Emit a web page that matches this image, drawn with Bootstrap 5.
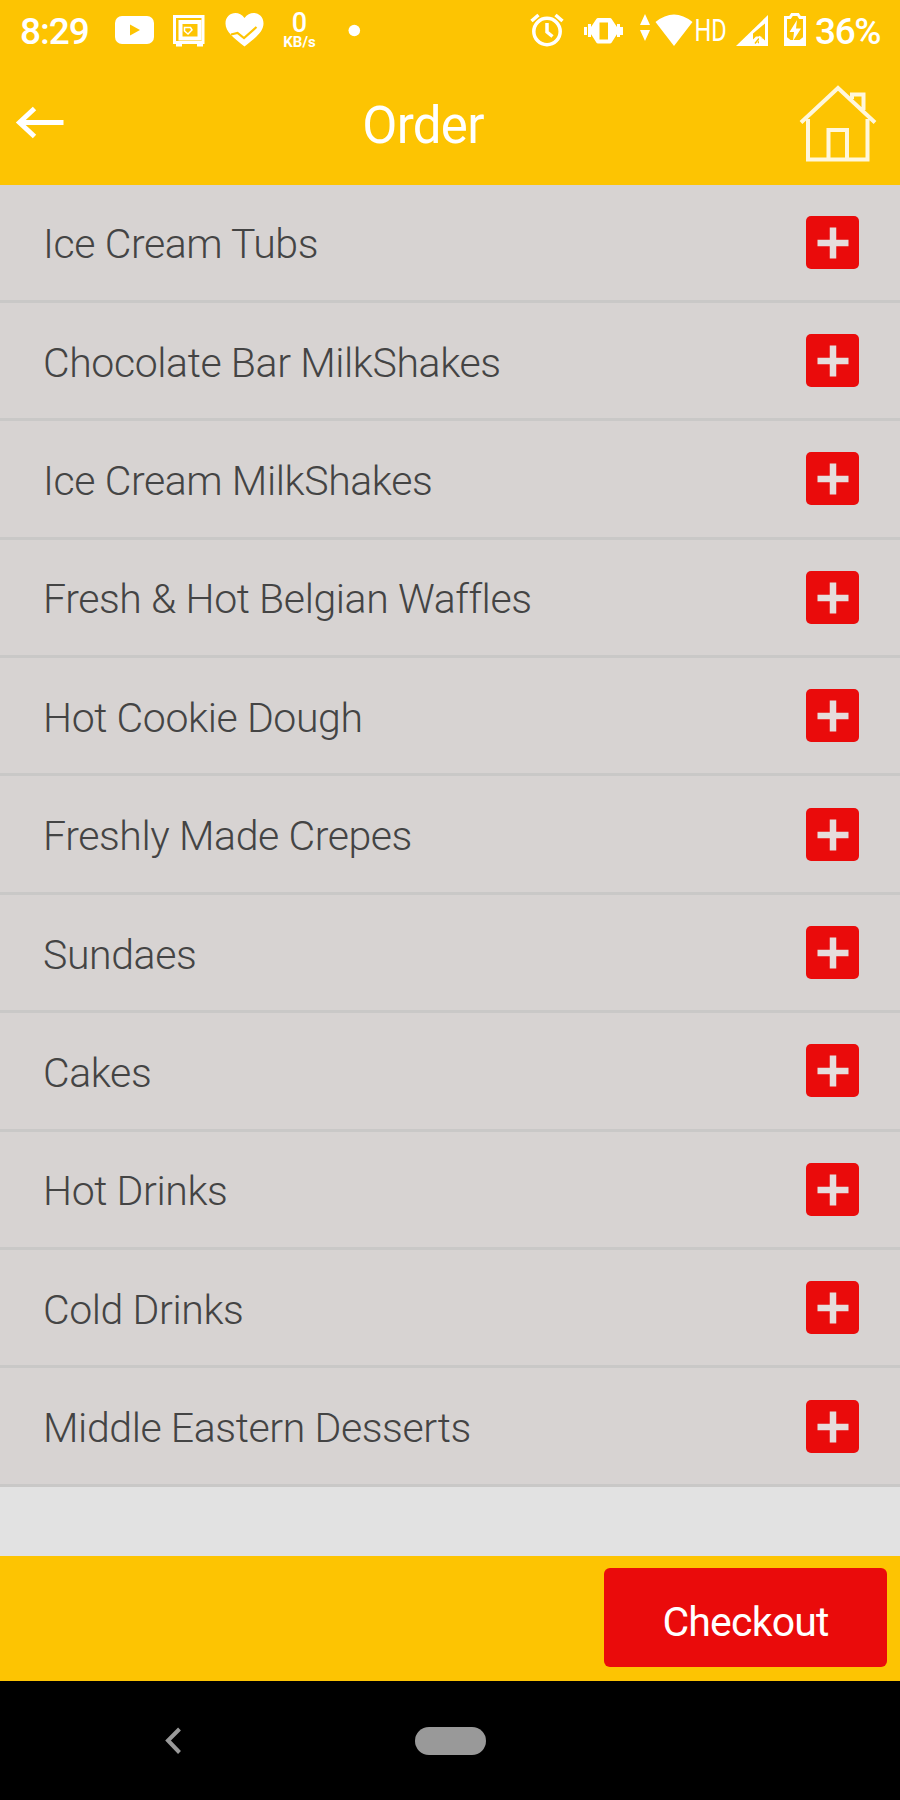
<!DOCTYPE html>
<html lang="en">
<head>
<meta charset="utf-8">
<meta name="viewport" content="width=device-width, initial-scale=1">
<title>Order</title>
<link href="https://cdn.jsdelivr.net/npm/bootstrap@5.3.0/dist/css/bootstrap.min.css" rel="stylesheet">
<style>
  :root { --amber: #fdc402; --red: #ea0b0b; }
  body { font-family: Roboto, "Liberation Sans", sans-serif; background: #e2e2e2; }
  .screen { width: 900px; height: 1800px; }
  .amber { background: var(--amber); }
  .status-bar { height: 60px; }
  .status-bar svg, .title-bar svg { display: block; flex: none; overflow: visible; }
  .status-text { font-size: 37px; font-weight: 500; line-height: 60px; white-space: nowrap; padding-top: 2px; }
  .clock { width: 110px; padding-left: 20px; letter-spacing: -1px; }
  .net-speed { width: 56px; padding: 12px 0 0 4px; }
  .net-value { font-size: 27px; line-height: 23px; font-weight: 500; width: 41px; }
  .net-unit { font-size: 15px; line-height: 15px; font-weight: 700; width: 41px; }
  .battery-level { width: 87px; padding-left: 2px; letter-spacing: -1.4px; }
  .title-bar { height: 124.5px; }
  .title-bar h1 { width: 700px; font-size: 51px; line-height: 60px; letter-spacing: -.7px; padding: 7px 54px 0 0; }
  .menu-row { height: 118.4px; background: #d7d3d2; border-bottom: 3px solid #c9c8c7; padding: 0 41px 0 43px; }
  .menu-label { font-size: 41px; font-weight: 300; line-height: 48px; letter-spacing: -.4px; color: #444; white-space: nowrap; padding-top: 4px; }
  .btn-plus { width: 53px; height: 53px; background: var(--red); border-radius: 5px; }
  .checkout-bar { height: 124.5px; padding: 12px 13px 14px; }
  .btn-checkout { width: 283px; background: var(--red); border-radius: 6px; font-size: 41px; line-height: 48px; letter-spacing: -.8px; padding-top: 15px; }
  .nav-keys { height: 119.5px; }
</style>
</head>
<body>
<div class="screen d-flex flex-column overflow-hidden">
  <header class="amber text-white">
    <div class="status-bar d-flex justify-content-between">
      <div class="d-flex">
        <span class="status-text clock">8:29</span>
        <!-- video -->
        <svg width="54" height="60" viewBox="110 0 54 60"><rect x="115" y="16" width="39" height="28" rx="7" fill="#fff"/><path d="M130 24.500l10 5.500-10 5.500z" fill="#fdc402"/></svg>
        <!-- safe -->
        <svg width="51" height="60" viewBox="164 0 51 60" fill="none" stroke="#fff"><path d="M174.500 16.500h28.500v26h-28.500z" stroke-width="3"/><path d="M180.500 22h19v16.500h-19z" stroke-width="4"/><path d="M176 45h6M197 45h6" stroke-width="3"/><path d="M184.500 27.500h6l1.500 2.500-4 4-3.500-3z" stroke-width="1.500"/></svg>
        <!-- heart with check -->
        <svg width="60" height="60" viewBox="215 0 60 60"><path d="M244.500 46.500C234 38 225.500 32 225.500 23.500c0-11 13-14 19-5.500 6-8.500 19-5.500 19 5.500 0 8.500-8.500 14.500-19 23z" fill="#fff"/><path d="M231 34.500l6.500-1.500 6.500 5 12.500-11" fill="none" stroke="#fdc402" stroke-width="2.200"/></svg>
        <div class="net-speed d-flex flex-column">
          <span class="net-value text-center">0</span>
          <span class="net-unit text-center">KB/s</span>
        </div>
        <svg width="46" height="60" viewBox="331 0 46 60"><circle cx="354.300" cy="30.500" r="5.800" fill="#fff"/></svg>
      </div>
      <div class="d-flex">
        <!-- alarm -->
        <svg width="50" height="60" viewBox="525 0 50 60" fill="none" stroke="#fff" stroke-width="3.500"><circle cx="547" cy="31.500" r="13.200"/><path d="M547 23v9l5.500 4.500M531.500 21l7-6M562.500 21l-7-6"/></svg>
        <!-- vibrate -->
        <svg width="60" height="60" viewBox="575 0 60 60" fill="none" stroke="#fff"><path d="M598 20h12l7 10.500-7 11h-12l-7-11z" fill="#fff" stroke-width="4" stroke-linejoin="round"/><rect x="599.500" y="22.500" width="8.500" height="17" fill="#fdc402" stroke="none"/><path d="M589.500 24v13M618.500 24v13M585.500 27v8M621.500 27v8" stroke-width="3"/></svg>
        <!-- data arrows and wifi -->
        <svg width="58" height="60" viewBox="635 0 58 60" fill="#fff"><path d="M645 14l5 11h-10zM645 41l5-11h-10zM655.500 22q18.500-15 37 0L674 46z"/></svg>
        <svg width="39" height="60" viewBox="693 0 39 60"><text transform="translate(694.500 41) scale(.76 1)" font-size="31" fill="#fff" font-family="Roboto, sans-serif">HD</text></svg>
        <!-- signal -->
        <svg width="48" height="60" viewBox="732 0 48 60"><path d="M736 46l32-31v31z" fill="#fff"/><path d="M765 23.500v17l-4-4h-5l-3 3v-6z" fill="#fdc402"/><path d="M755 43.500l4-5M762 38l-4 5" stroke="#fdc402" stroke-width="1.500"/><path d="M760 45v-7l4 4" fill="none" stroke="#fff" stroke-width="2"/></svg>
        <!-- battery -->
        <svg width="33" height="60" viewBox="780 0 33 60"><path d="M785.500 17.500h4.500l2-3h6l2 3h4.500V44.500h-19z" fill="none" stroke="#fff" stroke-width="3"/><path d="M785.500 36l5 4h9l5-4v8.500h-19z" fill="#fff"/><path d="M797 20l-7.500 12h4.500l-1 9 8-12.500h-5z" fill="#fff"/></svg>
        <span class="status-text battery-level">36%</span>
      </div>
    </div>
    <div class="title-bar d-flex justify-content-between">
      <svg width="100" height="124" viewBox="0 60 100 124" fill="none" stroke="#fff" stroke-width="5"><path d="M34.500 108.500L19.500 122.500l15 14M19 122.500h44.500"/></svg>
      <h1 class="m-0 fw-normal text-center align-self-center">Order</h1>
      <svg width="100" height="124" viewBox="800 59 100 124" fill="none" stroke="#fff7dc" stroke-width="4"><path d="M801 121.500l37-34.500 37 34.500M808 118v40.500h59.500V118M828.500 158v-29H847v29M852 98v-4.500h11.500V109"/></svg>
    </div>
  </header>

  <main>
    <ul class="list-unstyled m-0" id="menu"></ul>
  </main>

  <footer class="mt-auto">
    <div class="checkout-bar amber d-flex justify-content-end">
      <button class="btn btn-checkout border-0 text-white">Checkout</button>
    </div>
    <div class="nav-keys bg-black">
      <svg class="d-block" width="900" height="119" viewBox="0 1681 900 119"><path d="M179.500 1729l-11.500 11.500 11.500 12" fill="none" stroke="#999" stroke-width="4"/><rect x="415" y="1727" width="71" height="28" rx="14" fill="#999"/></svg>
    </div>
  </footer>
</div>
<script src="https://cdn.jsdelivr.net/npm/bootstrap@5.3.0/dist/js/bootstrap.bundle.min.js"></script>
<script>
  const categories = ["Ice Cream Tubs", "Chocolate Bar MilkShakes", "Ice Cream MilkShakes", "Fresh & Hot Belgian Waffles",
    "Hot Cookie Dough", "Freshly Made Crepes", "Sundaes", "Cakes", "Hot Drinks", "Cold Drinks", "Middle Eastern Desserts"];
  const menu = document.getElementById("menu");
  for (const name of categories) {
    const row = document.createElement("li");
    row.className = "menu-row d-flex align-items-center justify-content-between";
    row.innerHTML = '<span class="menu-label"></span><button class="btn btn-plus border-0 p-0" aria-label="Add">' +
      '<svg class="d-block" width="53" height="53" viewBox="0 0 53 53"><path d="M27 11.500v31M11.500 27h31" stroke="#e6dddc" stroke-width="6.500"/></svg></button>';
    row.firstChild.textContent = name;
    menu.append(row);
  }
</script>
</body>
</html>
